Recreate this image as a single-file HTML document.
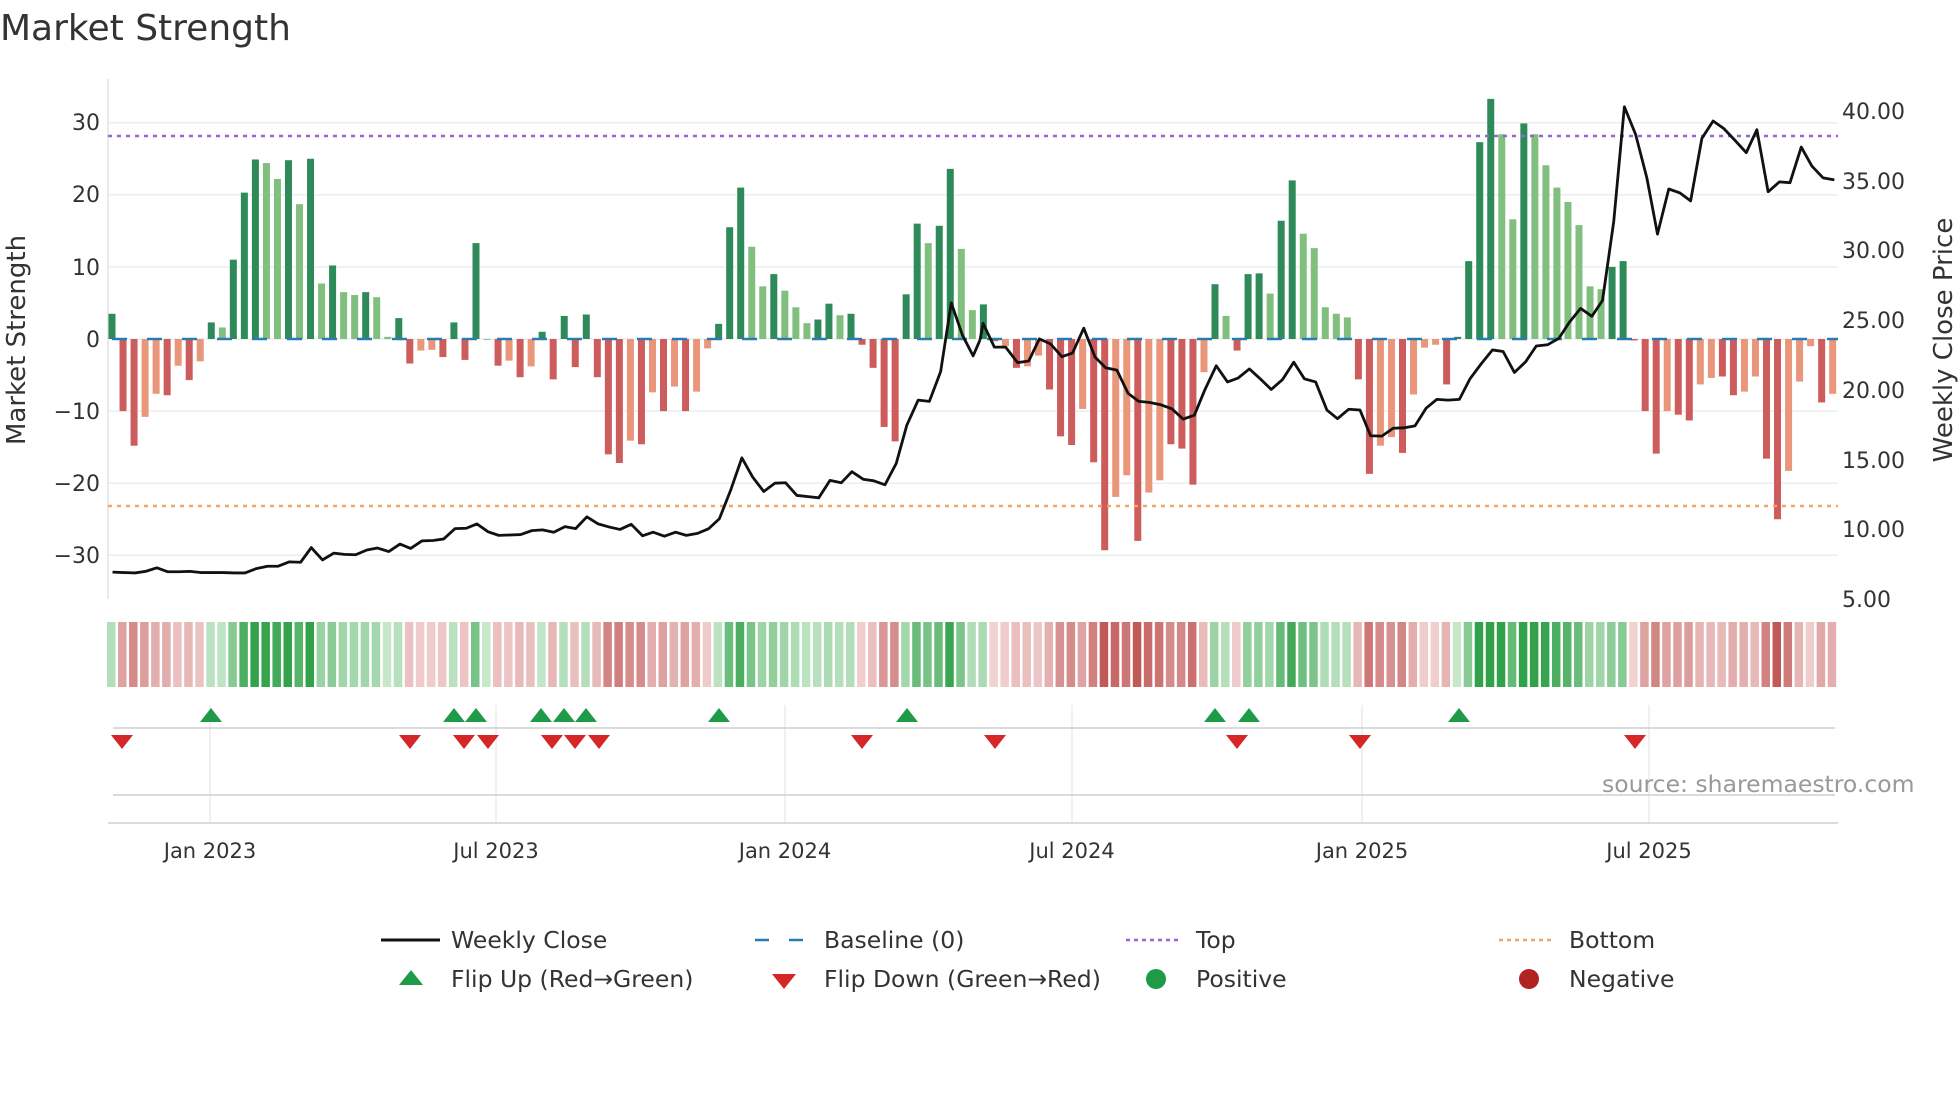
<!DOCTYPE html>
<html><head><meta charset="utf-8"><style>
html,body{margin:0;padding:0;background:#fff;width:1960px;height:1102px;overflow:hidden}
svg text{font-family:"DejaVu Sans","Liberation Sans",sans-serif;fill:#333}
</style></head><body>
<svg id="s" width="1960" height="1102" xmlns="http://www.w3.org/2000/svg">
<text x="0" y="40" font-size="36" fill="#333">Market Strength</text>
<g id="grid" stroke="#eceef1" stroke-width="1.5"></g>
<line x1="108" y1="79" x2="108" y2="599" stroke="#e4e4e4" stroke-width="1.5"/>
<g id="bars"></g>
<line x1="108" y1="136" x2="1838" y2="136" stroke="#9467d0" stroke-width="2.5" stroke-dasharray="4 5"/>
<line x1="108" y1="506" x2="1838" y2="506" stroke="#f4a460" stroke-width="2.5" stroke-dasharray="4 5"/>
<line x1="112" y1="339" x2="1838" y2="339" stroke="#2a7bb0" stroke-width="2.5" stroke-dasharray="15 20"/>
<g transform="scale(0.625,0.3954)"><polyline fill="none" stroke="#111" stroke-width="2.8" vector-effect="non-scaling-stroke" stroke-linejoin="round" points="180,1447 198,1448 216,1449 233,1445 251,1436 268,1446 286,1446 304,1445 321,1448 339,1448 357,1448 375,1449 392,1449 410,1438 428,1432 445,1432 463,1421 481,1422 498,1385 516,1416 534,1399 551,1402 569,1403 587,1391 604,1386 622,1395 640,1376 657,1387 675,1368 693,1367 710,1363 728,1337 746,1336 763,1325 781,1345 798,1354 816,1353 833,1352 851,1342 868,1340 886,1346 904,1332 921,1337 939,1307 957,1325 975,1333 992,1339 1010,1326 1028,1355 1045,1346 1063,1356 1081,1346 1098,1354 1116,1349 1134,1337 1151,1312 1169,1240 1187,1158 1204,1206 1222,1243 1240,1222 1257,1221 1275,1253 1293,1256 1310,1259 1328,1215 1346,1221 1363,1193 1381,1212 1398,1216 1416,1226 1434,1172 1451,1075 1469,1012 1487,1015 1505,940 1522,766 1540,848 1557,900 1568,860"/></g>
<g transform="translate(980,0) scale(0.625,0.3954)"><polyline fill="none" stroke="#111" stroke-width="2.8" vector-effect="non-scaling-stroke" stroke-linejoin="round" points="0,860 5,818 23,878 41,878 60,917 78,913 95,857 113,870 131,902 148,893 166,830 184,903 201,930 219,936 237,995 254,1015 272,1018 290,1024 307,1034 325,1060 343,1050 360,985 378,925 396,966 413,956 431,933 449,959 466,985 484,960 502,916 519,958 537,966 555,1037 572,1059 590,1035 608,1037 625,1102 643,1103 661,1083 678,1082 696,1077 714,1032 731,1010 749,1012 767,1010 784,958 802,920 820,885 837,889 855,942 873,915 890,875 908,872 926,856 943,815 961,780 979,800 996,760 1014,560 1031,270 1049,340 1067,450 1084,592 1102,478 1120,488 1137,508 1155,350 1173,306 1190,325 1208,355 1226,386 1243,328 1261,485 1279,460 1296,462 1314,372 1331,420 1349,450 1367,455"/></g>
<g font-size="22" text-anchor="end">
<text x="100" y="130">30</text><text x="100" y="202">20</text><text x="100" y="275">10</text><text x="100" y="347">0</text><text x="100" y="419">−10</text><text x="100" y="491">−20</text><text x="100" y="563">−30</text>
</g>
<g font-size="22">
<text x="1842" y="119">40.00</text><text x="1842" y="189">35.00</text><text x="1842" y="258">30.00</text><text x="1842" y="328">25.00</text><text x="1842" y="398">20.00</text><text x="1842" y="468">15.00</text><text x="1842" y="537">10.00</text><text x="1842" y="607">5.00</text>
</g>
<text transform="translate(25,340) rotate(-90)" font-size="26" text-anchor="middle">Market Strength</text>
<text transform="translate(1952,340) rotate(-90)" font-size="26" text-anchor="middle">Weekly Close Price</text>
<g id="heat"></g>
<g stroke="#eaeaea" stroke-width="1.5">
<line x1="210" y1="705" x2="210" y2="823"/><line x1="496" y1="705" x2="496" y2="823"/><line x1="785" y1="705" x2="785" y2="823"/><line x1="1072" y1="705" x2="1072" y2="823"/><line x1="1362" y1="705" x2="1362" y2="823"/><line x1="1649" y1="705" x2="1649" y2="823"/>
</g>
<line x1="113" y1="728" x2="1835" y2="728" stroke="#cfcfcf" stroke-width="1.5"/>
<line x1="113" y1="795" x2="1835" y2="795" stroke="#cfcfcf" stroke-width="1.5"/>
<line x1="108" y1="823" x2="1838" y2="823" stroke="#cfcfcf" stroke-width="1.5"/>
<g id="flips"></g>
<text x="1602" y="792" font-size="23.5" style="fill:#999">source: sharemaestro.com</text>
<g font-size="21" text-anchor="middle">
<text x="210" y="858">Jan 2023</text><text x="496" y="858">Jul 2023</text><text x="785" y="858">Jan 2024</text><text x="1072" y="858">Jul 2024</text><text x="1362" y="858">Jan 2025</text><text x="1649" y="858">Jul 2025</text>
</g>
<g font-size="23.5">
<line x1="381" y1="940" x2="440" y2="940" stroke="#111" stroke-width="3"/><text x="451" y="948">Weekly Close</text>
<line x1="755" y1="940" x2="810" y2="940" stroke="#2a7bb0" stroke-width="2.5" stroke-dasharray="14 20"/><text x="824" y="948">Baseline (0)</text>
<line x1="1126" y1="940" x2="1181" y2="940" stroke="#9467d0" stroke-width="2.5" stroke-dasharray="4 4"/><text x="1196" y="948">Top</text>
<line x1="1499" y1="940" x2="1554" y2="940" stroke="#f4a460" stroke-width="2.5" stroke-dasharray="4 4"/><text x="1569" y="948">Bottom</text>
<polygon points="399,985 423,985 411,970" fill="#1f9a46"/><text x="451" y="987">Flip Up (Red→Green)</text>
<polygon points="772,974 796,974 784,989" fill="#d62728"/><text x="824" y="987">Flip Down (Green→Red)</text>
<circle cx="1156" cy="979" r="10" fill="#1f9a46"/><text x="1196" y="987">Positive</text>
<circle cx="1529" cy="979" r="10" fill="#b22222"/><text x="1569" y="987">Negative</text>
</g>
</svg>
<script>
var NS="http://www.w3.org/2000/svg";
function el(p,t,a){var e=document.createElementNS(NS,t);for(var k in a)e.setAttribute(k,a[k]);p.appendChild(e);return e;}
var D="d",L="l",R="r",S="s";
var v=[[3.5,D],[-10,R],[-14.8,R],[-10.8,S],[-7.6,S],[-7.8,R],[-3.7,S],[-5.7,R],[-3.1,S],[2.3,D],[1.6,L],[11,D],[20.3,D],[24.9,D],[24.4,L],[22.2,L],[24.8,D],[18.7,L],[25,D],[7.7,L],[10.2,D],[6.5,L],[6.1,L],[6.5,D],[5.8,L],[0.3,L],[2.9,D],[-3.4,R],[-1.6,S],[-1.5,S],[-2.5,R],[2.3,D],[-2.9,R],[13.3,D],[0,D],[-3.7,R],[-3,S],[-5.3,R],[-3.8,S],[1,D],[-5.6,R],[3.2,D],[-3.9,R],[3.4,D],[-5.3,R],[-16,R],[-17.2,R],[-14.1,S],[-14.6,R],[-7.4,S],[-10,R],[-6.6,S],[-10,R],[-7.3,S],[-1.3,S],[2.1,D],[15.5,D],[21,D],[12.8,L],[7.3,L],[9,D],[6.7,L],[4.4,L],[2.2,L],[2.7,D],[4.9,D],[3.3,L],[3.5,D],[-0.8,R],[-4,R],[-12.2,R],[-14.2,R],[6.2,D],[16,D],[13.3,L],[15.7,D],[23.6,D],[12.5,L],[4,L],[4.8,D],[-0.3,R],[-1,S],[-4,R],[-3.8,S],[-2.3,S],[-7,R],[-13.5,R],[-14.7,R],[-9.7,S],[-17.1,R],[-29.3,R],[-21.9,S],[-18.9,S],[-28,R],[-21.3,S],[-19.6,S],[-14.6,R],[-15.2,R],[-20.2,R],[-4.6,S],[7.6,D],[3.2,L],[-1.6,R],[9,D],[9.1,D],[6.3,L],[16.4,D],[22,D],[14.6,L],[12.6,L],[4.4,L],[3.5,L],[3,L],[-5.6,R],[-18.7,R],[-14.8,S],[-13.6,S],[-15.8,R],[-7.7,S],[-1.2,S],[-0.8,S],[-6.3,R],[0.3,D],[10.8,D],[27.3,D],[33.3,D],[28.4,L],[16.6,L],[29.9,D],[28.4,L],[24.1,L],[21,L],[19,L],[15.8,L],[7.3,L],[6.9,L],[10,D],[10.8,D],[-0.2,R],[-10,R],[-15.9,R],[-10,S],[-10.5,R],[-11.3,R],[-6.3,S],[-5.4,S],[-5.2,R],[-7.8,R],[-7.3,S],[-5.2,S],[-16.6,R],[-25,R],[-18.3,S],[-5.9,S],[-1,S],[-8.8,R],[-7.6,S]];
var col={d:"#2e8a58",l:"#80bf7e",r:"#cd5c5c",s:"#e9967a"};
var g=document.getElementById("grid");
[30,20,10,0,-10,-20,-30].forEach(function(t){var y=339-t*7.21;el(g,"line",{x1:108,x2:1838,y1:y,y2:y});});
var b=document.getElementById("bars"),h=document.getElementById("heat");
v.forEach(function(p,i){var x=112+11.03*i,val=p[0],hh=Math.abs(val)*7.21;
el(b,"rect",{x:x-3.5,width:7,y:val>=0?339-hh:339,height:Math.max(hh,0.5),fill:col[p[1]]});
var a=Math.min(Math.abs(val)/25,1),c;
if(val>=0){c="rgb("+Math.round(200-150*a)+","+Math.round(232-70*a)+","+Math.round(204-130*a)+")";}
else{c="rgb("+Math.round(242-50*a)+","+Math.round(210-120*a)+","+Math.round(210-122*a)+")";}
el(h,"rect",{x:x-5,width:8.5,y:622,height:65,fill:c});});
var f=document.getElementById("flips");
[211,454,476,541,564,586,719,907,1215,1249,1459].forEach(function(x){el(f,"polygon",{points:(x-11)+",722 "+(x+11)+",722 "+x+",708",fill:"#1f9a46"});});
[122,410,464,488,552,575,599,862,995,1237,1360,1635].forEach(function(x){el(f,"polygon",{points:(x-11)+",735 "+(x+11)+",735 "+x+",749",fill:"#d62728"});});
</script>
</body></html>
